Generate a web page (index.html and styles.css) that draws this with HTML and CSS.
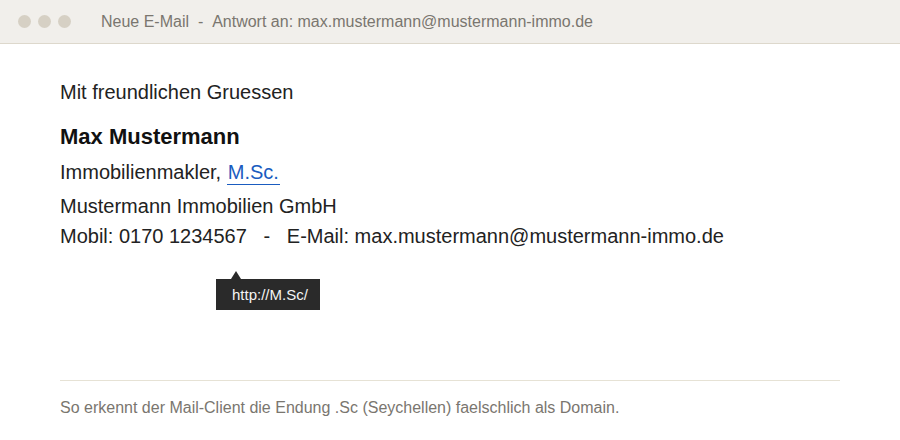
FILE: index.html
```html
<!DOCTYPE html>
<html lang="de">
<head>
    <meta charset="UTF-8">
    <meta name="viewport" content="width=device-width, initial-scale=1.0">
    <title>Neue E-Mail</title>
    <link rel="stylesheet" href="styles.css">
</head>
<body>
    <div class="titlebar">
        <div class="dots">
            <span class="dot"></span>
            <span class="dot"></span>
            <span class="dot"></span>
        </div>
        <div class="window-title">Neue E-Mail&nbsp; - &nbsp;Antwort an: max.mustermann@mustermann-immo.de</div>
    </div>

    <div class="mail-body">
        <p class="greeting">Mit freundlichen Gruessen</p>
        <p class="sig-name">Max Mustermann</p>
        <p class="sig-title">Immobilienmakler, <a class="auto-link" href="#">M.Sc.</a></p>
        <p class="sig-company">Mustermann Immobilien GmbH</p>
        <p class="sig-contact">Mobil: 0170 1234567   -   E-Mail: max.mustermann@mustermann-immo.de</p>

        <div class="link-tip">http://M.Sc/</div>
    </div>

    <div class="note">
        <p>So erkennt der Mail-Client die Endung .Sc (Seychellen) faelschlich als Domain.</p>
    </div>
</body>
</html>
```

FILE: styles.css
```css
body {
    margin: 0;
    padding: 0;
    background-color: #fff;
    font-family: 'Liberation Sans', Arial, sans-serif;
    color: #222;
}
.titlebar {
    height: 43px;
    display: flex;
    align-items: center;
    background-color: #f1efeb;
    border-bottom: 1px solid #ddd8cc;
}
.dots {
    display: flex;
    gap: 7px;
    margin-left: 18px;
    margin-right: 30px;
}
.dot {
    width: 13px;
    height: 13px;
    border-radius: 50%;
    background-color: #d6d0c4;
}
.window-title {
    font-size: 16px;
    color: #7a766f;
}
.mail-body {
    position: relative;
    padding: 37px 60px 0 60px;
    height: 336px;
    box-sizing: border-box;
    font-size: 20px;
}
.mail-body p {
    margin: 0;
    line-height: 23px;
}
.greeting {
    margin-bottom: 21px !important;
}
.sig-name {
    font-size: 22px;
    font-weight: bold;
    color: #111;
    margin-bottom: 13px !important;
}
.sig-title {
    margin-bottom: 11px !important;
}
.sig-contact {
    margin-top: 7px !important;
    white-space: pre;
}
.auto-link {
    color: #1a5cc0;
    text-decoration: none;
    border-bottom: 1px solid #1a5cc0;
    padding: 0 1px 1px 1px;
}
/* tooltip der automatisch erkannten url */
.link-tip {
    position: absolute;
    left: 216px;
    top: 235px;
    padding: 0 12px 0 16px;
    height: 31px;
    line-height: 31px;
    background-color: #2a2a2a;
    color: #f4f4f4;
    font-size: 15px;
}
.link-tip::before {
    content: "";
    position: absolute;
    left: 15px;
    top: -8px;
    border-left: 5px solid transparent;
    border-right: 5px solid transparent;
    border-bottom: 8px solid #2a2a2a;
}
.note {
    margin: 0 60px;
    border-top: 1px solid #e6e2d5;
}
.note p {
    margin: 0;
    padding-top: 18px;
    font-size: 16px;
    color: #7a766f;
}
```
